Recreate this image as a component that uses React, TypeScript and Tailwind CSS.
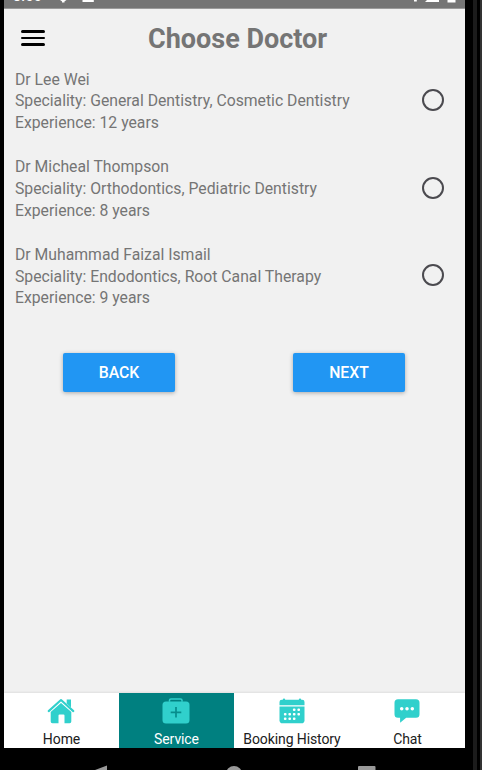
import React from "react";

const doctors = [
  { name: "Dr Lee Wei", speciality: "General Dentistry, Cosmetic Dentistry", years: 12 },
  { name: "Dr Micheal Thompson", speciality: "Orthodontics, Pediatric Dentistry", years: 8 },
  { name: "Dr Muhammad Faizal Ismail", speciality: "Endodontics, Root Canal Therapy", years: 9 },
];

function StatusBar() {
  return (
    <div className="relative h-[9px] shrink-0 overflow-hidden border-b border-[#9b9b9b] bg-[#757575]">
      <span className="absolute left-[9px] top-[-12px] text-[14px] leading-[16px] font-medium tracking-[0.4px] text-white">8:00</span>
      <svg className="absolute left-0 top-0" width="461" height="8" viewBox="4 0 461 8">
        <path d="M60 0h6.500l-1.800 1.200h-2.900zM62 0h2.500v2.500h-2.500zM82.500 0h11.300v2h-11.300zM414 0h2.800v1.500h-2.800zM427 0h12v2h-14zM447.500 0h8v2.500h-8z" fill="#fff" />
      </svg>
    </div>
  );
}

function HomeIcon() {
  return (
    <svg width="28" height="26" viewBox="0 0 28 26">
      <path d="M19.700 1.500h4.300v8l-4.300-4z" fill="#30d0cc" />
      <path d="M1.700 13.100 14 2 26.300 13.100" fill="none" stroke="#30d0cc" strokeWidth="2.100" strokeLinecap="round" strokeLinejoin="round" />
      <path d="M3.700 14.100 14 4.900l10.300 9.200v9.400q0 1.700-1.700 1.700h-5.100v-7.700q0-1-1-1h-4q-1 0-1 1v7.700H5.400q-1.700 0-1.700-1.700z" fill="#30d0cc" />
    </svg>
  );
}

function ServiceIcon() {
  return (
    <svg width="28" height="26" viewBox="0 0 28 26">
      <path d="M7.500 3.700V2.300Q7.500.900 9 .900h9.500q1.500 0 1.500 1.400v1.400" fill="none" stroke="#30d0cc" strokeWidth="1.500" />
      <rect x=".5" y="3.500" width="27" height="22" rx="3.500" fill="#30d0cc" />
      <path d="M14 9v10.600M8.700 14.300h10.600" stroke="#078d8c" strokeWidth="1.700" />
    </svg>
  );
}

function CalendarIcon() {
  const dots = [
    [15.200, 11.700], [19.700, 11.700],
    [6.200, 16.200], [10.700, 16.200], [15.200, 16.200], [19.700, 16.200],
    [6.200, 20.700], [10.700, 20.700], [15.200, 20.700],
  ];
  return (
    <svg width="26" height="26" viewBox="0 0 26 26">
      <path d="M.5 7.200V4q0-2.300 2.300-2.300h20.400q2.300 0 2.300 2.300v3.200z" fill="#30d0cc" />
      <path d="M.5 8.500h25v13.700q0 3.100-3.100 3.100H3.600q-3.100 0-3.100-3.100z" fill="#30d0cc" />
      <path d="M5 1.700v1.900M21 1.700v1.900" stroke="#30d0cc" strokeWidth="2.400" strokeLinecap="round" />
      {dots.map(([x, y]) => (
        <rect key={`${x}-${y}`} x={x - 1.300} y={y - 1.300} width="2.600" height="2.600" rx=".9" fill="#fff" />
      ))}
    </svg>
  );
}

function ChatIcon() {
  return (
    <svg width="26" height="26" viewBox="0 0 26 26">
      <path d="M4 1.200h18q3.500 0 3.500 3.500v11.600q0 3.500-3.500 3.500h-9.800L6.100 24.700v-4.900H4q-3.500 0-3.500-3.500V4.700q0-3.500 3.500-3.500z" fill="#30d0cc" />
      <circle cx="7.700" cy="10.800" r="1.750" fill="#fff" />
      <circle cx="13" cy="10.800" r="1.750" fill="#fff" />
      <circle cx="18.300" cy="10.800" r="1.750" fill="#fff" />
    </svg>
  );
}

function Tab({ icon, label, active }: { icon: React.ReactNode; label: string; active?: boolean }) {
  return (
    <button className={`flex flex-col items-center pt-[5px] ${active ? "bg-[#008080] text-white" : "bg-white text-[#202020]"}`}>
      <span className="mr-px">{icon}</span>
      <span className="mt-[7px] whitespace-nowrap text-[14px] leading-[16px] tracking-[-0.1px]">{label}</span>
    </button>
  );
}

export default function App() {
  return (
    <div className="flex h-[770px] w-[482px] overflow-hidden bg-black pl-1 font-[Roboto,sans-serif]">
      <div className="flex w-[461px] shrink-0 flex-col">
        <StatusBar />
        <main className="flex h-[684px] shrink-0 flex-col bg-[#f1f1f1] text-[#757575]">
          <header className="flex h-[58px] items-center pl-[17px]">
            <button aria-label="Menu" className="flex w-6 flex-col gap-[4px]">
              <span className="h-[2.500px] rounded-full bg-black" />
              <span className="h-[2.500px] rounded-full bg-black" />
              <span className="h-[2.500px] rounded-full bg-black" />
            </button>
            <h1 className="ml-[103px] pt-[2px] whitespace-nowrap text-[27px] leading-8 font-bold">Choose Doctor</h1>
          </header>
          <div className="pl-[11px] pt-[1.500px]">
            {doctors.map((d) => (
              <label key={d.name} className="flex h-[87.700px] items-start pr-[21px]">
                <div className="flex-1 whitespace-nowrap text-[15.750px] leading-[21.800px]">
                  <p>{d.name}</p>
                  <p>Speciality: {d.speciality}</p>
                  <p>Experience: {d.years} years</p>
                </div>
                <span className="mt-[20.500px] size-[22px] rounded-full border-2 border-[#4b4a4f]" />
              </label>
            ))}
          </div>
          <div className="mt-[21px] flex justify-between pl-[59px] pr-[60px] text-[15.800px] font-medium text-white">
            <button className="h-[39.500px] w-[112px] rounded-[2px] bg-[#2196f3] pt-[2px] shadow-[0_1px_4px_rgba(0,0,0,0.3)]">BACK</button>
            <button className="h-[39.500px] w-[112px] rounded-[2px] bg-[#2196f3] pt-[2px] shadow-[0_1px_4px_rgba(0,0,0,0.3)]">NEXT</button>
          </div>
        </main>
        <nav className="z-10 grid h-[55px] shrink-0 grid-cols-[115px_115px_116px_115px] shadow-[0_-1px_2px_rgba(0,0,0,0.08)]">
          <Tab icon={<HomeIcon />} label="Home" />
          <Tab icon={<ServiceIcon />} label="Service" active />
          <Tab icon={<CalendarIcon />} label="Booking History" />
          <Tab icon={<ChatIcon />} label="Chat" />
        </nav>
        <svg className="bg-black" width="461" height="22" viewBox="4 748 461 22">
          <path d="M95 770 107 765.500v4.500z" fill="#999" />
          <circle cx="234" cy="774" r="8" fill="#999" />
          <rect x="358" y="766" width="17.500" height="10" rx="1" fill="#999" />
        </svg>
      </div>
      <div className="ml-[8px] w-[4px] bg-[#1c1c1c]" />
      <div className="ml-[3px] w-[2px] bg-[#333]" />
    </div>
  );
}
